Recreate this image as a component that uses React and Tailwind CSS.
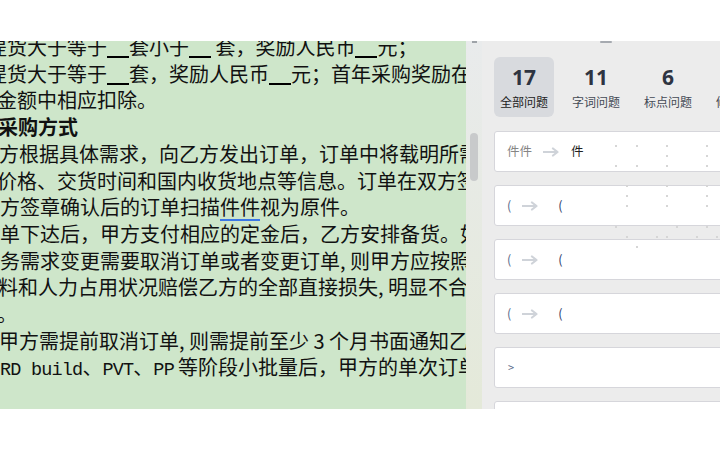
import React from 'react';

const CJK = "font-['Noto_Sans_CJK_SC','Noto_Sans',sans-serif]";

const Blank = () => <span className="inline-block w-[22px] h-[2px] bg-black align-[-3px]" />;
const Comma = () => <span className="inline-block w-[10px]">,</span>;

const Arrow = () => (
  <svg width="16" height="10" viewBox="0 0 16 10" className="shrink-0">
    <path d="M0.5 5H14M10 1.5L14.5 5L10 8.5" fill="none" stroke="#cfd3d9" strokeWidth="2.2" strokeLinecap="round" strokeLinejoin="round" />
  </svg>
);

const MONO = "font-['Liberation_Mono',monospace] text-[18.5px] tracking-[-0.8px]";

const lines = [
  { ml: 'ml-[-13px]', body: <>提货大于等于<Blank />套小于<Blank /> 套，奖励人民币<Blank />元；</> },
  { ml: 'ml-[-13px]', body: <>提货大于等于<Blank />套，奖励人民币<Blank />元；首年采购奖励在</> },
  { ml: 'ml-[-3px]', body: <>金额中相应扣除。</> },
  { ml: 'ml-[-2px]', body: <span className="font-bold">采购方式</span> },
  { ml: 'ml-[-1px]', body: <>方根据具体需求，向乙方发出订单，订单中将载明所需</> },
  { ml: 'ml-[-3px]', body: <>价格、交货时间和国内收货地点等信息。订单在双方签</> },
  {
    ml: 'ml-0',
    body: (
      <>
        方签章确认后的订单扫描
        <span className="underline decoration-[#3b78e7] decoration-2 underline-offset-[4px]">件件</span>
        视为原件。
      </>
    ),
  },
  { ml: 'ml-0', body: <>单下达后，甲方支付相应的定金后，乙方安排备货。如</> },
  { ml: 'ml-0', body: <>务需求变更需要取消订单或者变更订单<Comma />则甲方应按照</> },
  { ml: 'ml-[-2px]', body: <>料和人力占用状况赔偿乙方的全部直接损失<Comma />明显不合</> },
  { ml: 'ml-[-3px]', body: <>。</> },
  { ml: 'ml-[-1px]', body: <>甲方需提前取消订单<Comma />则需提前至少 3 个月书面通知乙</> },
  {
    ml: 'ml-0',
    body: (
      <>
        <span className={MONO}>RD build</span>、
        <span className={MONO}>PVT</span>、
        <span className={MONO}>PP</span>
        <span className="ml-[4px]">等阶段小批量后，甲方的单次订单</span>
      </>
    ),
  },
];

const tabs = [
  { n: '17', label: '全部问题', active: true },
  { n: '11', label: '字词问题' },
  { n: '6', label: '标点问题' },
  { n: '0', label: '修辞问题' },
];

const dots = [
  [615, 145], [636, 145], [666, 145], [706, 145], [666, 155], [706, 155],
  [615, 165], [636, 165], [666, 165], [706, 165], [626, 185], [666, 185],
  [706, 185], [626, 195], [666, 195], [706, 195], [626, 205], [666, 205],
  [706, 205], [615, 226], [676, 226], [706, 226], [626, 236], [656, 236],
  [666, 236], [696, 236], [716, 236], [636, 246],
];

export default function App() {
  return (
    <div className={`relative w-[720px] h-[450px] bg-white overflow-hidden ${CJK}`}>
      <div className="h-[41px]" />
      <div className="flex h-[368px]">
        {/* document */}
        <div className="w-[466px] shrink-0 bg-[#cee6ca] overflow-hidden">
          <div className="mt-[-7px] text-[20px] leading-[26.7px] text-[#111]">
            {lines.map((l, i) => (
              <div key={i} className={`whitespace-nowrap ${l.ml}`}>{l.body}</div>
            ))}
          </div>
        </div>

        {/* scrollbar */}
        <div className="w-[16px] shrink-0 flex flex-col bg-linear-to-b from-[#e9ebec] to-[#e4e9d9]">
          <div className="mx-auto w-[5px] h-[2px] bg-[#9ea3a8]" />
          <div className="mx-auto mt-[90px] w-[8px] h-[48px] rounded-full bg-[#c8cacb]" />
        </div>

        {/* issue panel */}
        <div className="flex-1 bg-[#ececec] overflow-hidden">
          <div className="ml-[118px] w-[12px] h-[2px] rounded bg-[#a6aab0]" />
          <div className="mt-[14px] pl-[12px] flex gap-[12px]">
            {tabs.map((t) => (
              <div
                key={t.label}
                className={`w-[60px] h-[60px] shrink-0 rounded-md flex flex-col items-center ${t.active ? 'bg-[#d8dade]' : ''}`}
              >
                <span className="mt-[8px] text-[21px] leading-[24px] font-bold text-[#2e3441] font-['Noto_Sans',sans-serif]">{t.n}</span>
                <span className={`mt-[5px] text-[12px] leading-[16px] whitespace-nowrap ${t.active ? 'text-[#222]' : 'text-[#444a55]'}`}>{t.label}</span>
              </div>
            ))}
          </div>

          <div className="mt-[14px] pl-[12px] flex flex-col gap-[13px]">
            <div className="w-[250px] h-[41px] shrink-0 bg-white border border-[#d6d6db] rounded-[3px] flex items-center pl-[12px] text-[12.5px]">
              <span className="text-[#858585]">件件</span>
              <span className="ml-[11px]"><Arrow /></span>
              <span className="ml-[12px] text-[#222]">件</span>
            </div>
            {[0, 1, 2].map((i) => (
              <div key={i} className="w-[250px] h-[41px] shrink-0 bg-white border border-[#d6d6db] rounded-[3px] flex items-center pl-[12px] text-[12.5px]">
                <span className="text-[#5a6a8a]">(</span>
                <span className="ml-[11px]"><Arrow /></span>
                <span className="ml-[20px] text-[#2c3a66]">(</span>
              </div>
            ))}
            <div className="w-[250px] h-[41px] shrink-0 bg-white border border-[#d6d6db] rounded-[3px] flex items-center pl-[13px] text-[11px] text-[#5a6a8a]">
              &gt;
            </div>
            <div className="w-[250px] h-[41px] shrink-0 bg-white border border-[#d6d6db] rounded-[3px]" />
          </div>
        </div>
      </div>

      <svg className="absolute left-0 top-0 pointer-events-none" width="720" height="450">
        {dots.map(([x, y], i) => (
          <rect key={i} x={x} y={y} width="2" height="2" fill="#d6d6d6" />
        ))}
      </svg>
    </div>
  );
}
